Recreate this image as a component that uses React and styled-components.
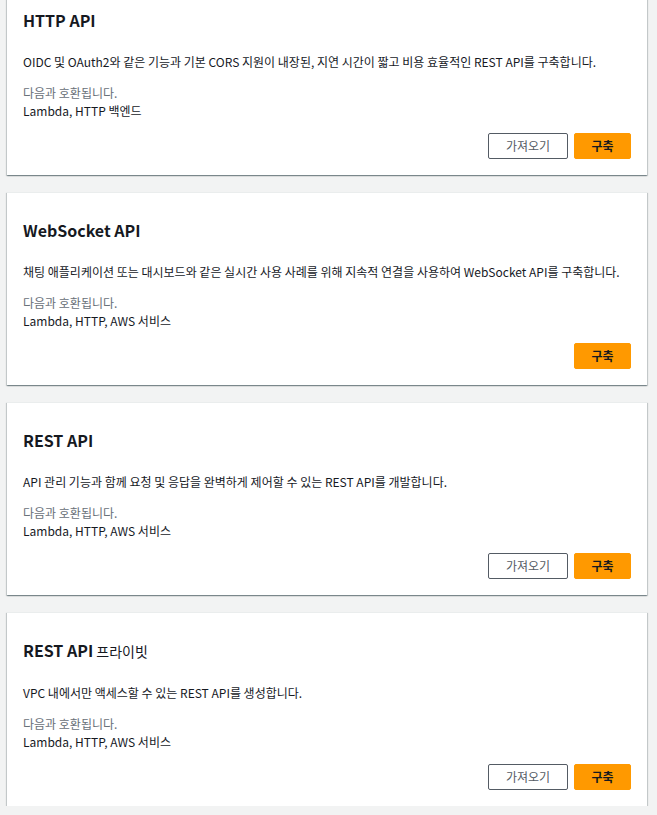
import React from "react";
import styled, { createGlobalStyle } from "styled-components";

const Global = createGlobalStyle`
  html, body { margin: 0; padding: 0; background: #f2f3f3; }
  body {
    font-family: "Noto Sans CJK KR", "Noto Sans", sans-serif;
    color: #16191f;
    -webkit-font-smoothing: antialiased;
  }
`;

const List = styled.div`
  display: flex;
  flex-direction: column;
  gap: 17px;
  padding: 0 10px 0 7px;
  margin-top: -18px;
`;

const Card = styled.section`
  background: #fff;
  border-top: 1px solid #eaeded;
  box-shadow: 0 1px 1px 0 rgba(0, 28, 36, 0.3), 1px 1px 1px 0 rgba(0, 28, 36, 0.15),
    -1px 1px 1px 0 rgba(0, 28, 36, 0.15);
  padding: 26px 16px 16px;
  display: flex;
  flex-direction: column;
`;

const Title = styled.h2`
  margin: 0;
  font-size: 16px;
  line-height: 22px;
  font-weight: 700;
  color: #16191f;
`;

const Sub = styled.span`
  font-weight: 400;
  font-size: 14px;
`;

const Desc = styled.p`
  margin: 22px 0 0;
  font-size: 12px;
  line-height: 18px;
`;

const Compat = styled.div`
  margin-top: 13px;
  font-size: 12px;
  line-height: 18px;
`;

const Muted = styled.div`
  color: #687078;
`;

const Actions = styled.div`
  display: flex;
  justify-content: flex-end;
  gap: 6px;
  margin-top: 13px;
`;

const Button = styled.button`
  height: 26px;
  min-width: ${(p) => (p.$primary ? "57px" : "80px")};
  padding: 0 12px;
  border-radius: 2px;
  font-family: inherit;
  font-size: 12px;
  line-height: 16px;
  font-weight: ${(p) => (p.$primary ? 700 : 400)};
  cursor: pointer;
  border: 1px solid ${(p) => (p.$primary ? "#ff9900" : "#545b64")};
  background: ${(p) => (p.$primary ? "#ff9900" : "#fff")};
  color: ${(p) => (p.$primary ? "#16191f" : "#545b64")};
`;

const apis = [
  {
    title: "HTTP API",
    desc: "OIDC 및 OAuth2와 같은 기능과 기본 CORS 지원이 내장된, 지연 시간이 짧고 비용 효율적인 REST API를 구축합니다.",
    compat: "Lambda, HTTP 백엔드",
    importable: true,
  },
  {
    title: "WebSocket API",
    desc: "채팅 애플리케이션 또는 대시보드와 같은 실시간 사용 사례를 위해 지속적 연결을 사용하여 WebSocket API를 구축합니다.",
    compat: "Lambda, HTTP, AWS 서비스",
    importable: false,
  },
  {
    title: "REST API",
    desc: "API 관리 기능과 함께 요청 및 응답을 완벽하게 제어할 수 있는 REST API를 개발합니다.",
    compat: "Lambda, HTTP, AWS 서비스",
    importable: true,
  },
  {
    title: "REST API",
    sub: "프라이빗",
    desc: "VPC 내에서만 액세스할 수 있는 REST API를 생성합니다.",
    compat: "Lambda, HTTP, AWS 서비스",
    importable: true,
  },
];

export default function App() {
  return (
    <>
      <Global />
      <List>
        {apis.map((a, i) => (
          <Card key={i}>
            <Title>
              {a.title}
              {a.sub && <Sub> {a.sub}</Sub>}
            </Title>
            <Desc>{a.desc}</Desc>
            <Compat>
              <Muted>다음과 호환됩니다.</Muted>
              <div>{a.compat}</div>
            </Compat>
            <Actions>
              {a.importable && <Button>가져오기</Button>}
              <Button $primary>구축</Button>
            </Actions>
          </Card>
        ))}
      </List>
    </>
  );
}
